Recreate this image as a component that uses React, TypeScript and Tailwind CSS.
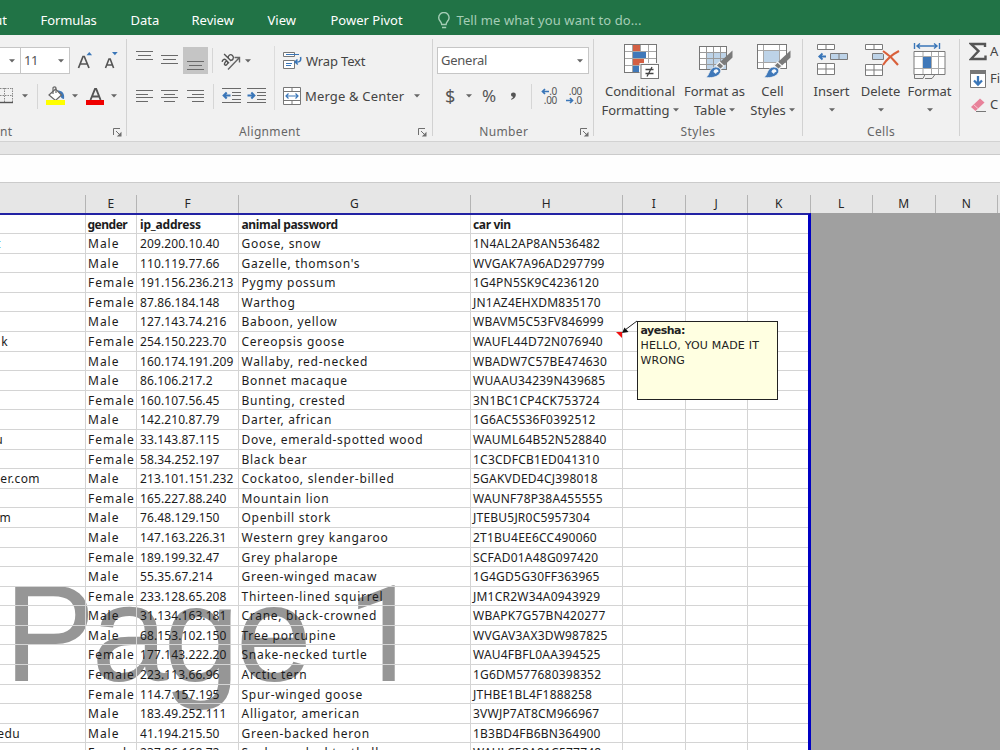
import type { ReactNode } from 'react';

const TABS = [
  { label: 'Formulas', css: 'ml-[33.5px] w-[90px] tracking-[-0.1px]' },
  { label: 'Data', css: 'w-[61px]' },
  { label: 'Review', css: 'w-[76px]' },
  { label: 'View', css: 'w-[63px]' },
  { label: 'Power Pivot', css: 'w-[106px]' },
];

const COLUMNS = [
  { name: '', css: 'w-[85.5px]' },
  { name: 'E', css: 'w-[51.5px]' },
  { name: 'F', css: 'w-[102px]' },
  { name: 'G', css: 'w-[231.5px]' },
  { name: 'H', css: 'w-[152.5px]' },
  { name: 'I', css: 'w-[62.5px]' },
  { name: 'J', css: 'w-[62.5px]' },
  { name: 'K', css: 'w-[62.5px]' },
  { name: 'L', css: 'w-[62.5px]' },
  { name: 'M', css: 'w-[62.5px]' },
  { name: 'N', css: 'w-[62.5px]' },
];

// gender, ip_address, animal password, car vin
const ROWS = [
  ['Male', '209.200.10.40', 'Goose, snow', '1N4AL2AP8AN536482'],
  ['Male', '110.119.77.66', "Gazelle, thomson's", 'WVGAK7A96AD297799'],
  ['Female', '191.156.236.213', 'Pygmy possum', '1G4PN5SK9C4236120'],
  ['Female', '87.86.184.148', 'Warthog', 'JN1AZ4EHXDM835170'],
  ['Male', '127.143.74.216', 'Baboon, yellow', 'WBAVM5C53FV846999'],
  ['Female', '254.150.223.70', 'Cereopsis goose', 'WAUFL44D72N076940'],
  ['Male', '160.174.191.209', 'Wallaby, red-necked', 'WBADW7C57BE474630'],
  ['Male', '86.106.217.2', 'Bonnet macaque', 'WUAAU34239N439685'],
  ['Female', '160.107.56.45', 'Bunting, crested', '3N1BC1CP4CK753724'],
  ['Male', '142.210.87.79', 'Darter, african', '1G6AC5S36F0392512'],
  ['Female', '33.143.87.115', 'Dove, emerald-spotted wood', 'WAUML64B52N528840'],
  ['Female', '58.34.252.197', 'Black bear', '1C3CDFCB1ED041310'],
  ['Male', '213.101.151.232', 'Cockatoo, slender-billed', '5GAKVDED4CJ398018'],
  ['Female', '165.227.88.240', 'Mountain lion', 'WAUNF78P38A455555'],
  ['Male', '76.48.129.150', 'Openbill stork', 'JTEBU5JR0C5957304'],
  ['Male', '147.163.226.31', 'Western grey kangaroo', '2T1BU4EE6CC490060'],
  ['Female', '189.199.32.47', 'Grey phalarope', 'SCFAD01A48G097420'],
  ['Male', '55.35.67.214', 'Green-winged macaw', '1G4GD5G30FF363965'],
  ['Female', '233.128.65.208', 'Thirteen-lined squirrel', 'JM1CR2W34A0943929'],
  ['Male', '31.134.163.181', 'Crane, black-crowned', 'WBAPK7G57BN420277'],
  ['Male', '68.153.102.150', 'Tree porcupine', 'WVGAV3AX3DW987825'],
  ['Female', '177.143.222.20', 'Snake-necked turtle', 'WAU4FBFL0AA394525'],
  ['Female', '223.113.66.96', 'Arctic tern', '1G6DM577680398352'],
  ['Female', '114.7.157.195', 'Spur-winged goose', 'JTHBE1BL4F1888258'],
  ['Male', '183.49.252.111', 'Alligator, american', '3VWJP7AT8CM966967'],
  ['Male', '41.194.215.50', 'Green-backed heron', '1B3BD4FB6BN364900'],
  ['Female', '237.86.168.72', 'Snake-necked turtle lly', 'WAULC58A81C577748'],
];

// tail ends of the e-mail column that is scrolled off to the left
const EMAILS: Record<number, { text: string; css: string }> = {
  0: { text: 't', css: 'w-[1px] text-[#3a9bb5]' },
  5: { text: 'k', css: 'w-[8px]' },
  10: { text: 'u', css: 'w-[3px]' },
  12: { text: 'er.com', css: 'w-[40px]' },
  14: { text: 'm', css: 'w-[11px]' },
  25: { text: 'edu', css: 'w-[20px]' },
};

const Caret = ({ css = '' }: { css?: string }) => (
  <svg className={`h-[4px] w-[6px] shrink-0 ${css}`} viewBox="0 0 6 4">
    <path d="M0 0.3h6L3 3.6z" fill="#666" />
  </svg>
);

const Lines = ({ rows, css = '' }: { rows: number[][]; css?: string }) => (
  <svg className={`h-[26px] w-[17px] shrink-0 ${css}`} viewBox="0 0 17 26">
    {rows.map(([x, y, w]) => (
      <rect key={y} x={x} y={y} width={w} height="1" fill="#6a6a6a" />
    ))}
  </svg>
);

const Sep = ({ css = '' }: { css?: string }) => (
  <div className={`h-[25px] w-px shrink-0 bg-[#d6d6d6] ${css}`} />
);

const Launcher = () => (
  <svg className="h-[9px] w-[9px]" viewBox="0 0 9 9" fill="none" stroke="#6f6f6f">
    <path d="M0.5 7V0.5H7M3 3l4 4" />
    <path d="M8.5 3.8v4.7H3.8z" fill="#6f6f6f" stroke="none" />
  </svg>
);

type GroupProps = {
  label: string;
  css: string;
  labelCss?: string;
  launcher?: boolean;
  children: ReactNode;
};

const Group = ({ label, css, labelCss = 'flex-1 text-center', launcher, children }: GroupProps) => (
  <div className={`flex h-[106px] shrink-0 flex-col pt-[8px] ${css}`}>
    <div className="h-[80px]">{children}</div>
    <div className="flex h-[19px] items-center justify-between text-[12px] text-[#666]">
      <div className={`tracking-[0.35px] ${labelCss}`}>{label}</div>
      {launcher && (
        <div className="mr-[4.5px] pt-px">
          <Launcher />
        </div>
      )}
    </div>
  </div>
);

const GroupSep = () => <div className="mt-[4px] h-[97px] w-px shrink-0 bg-[#d2d2d2]" />;

const Brush = () => (
  <g>
    <path d="M34.500 7.500v7L26 22.500l-4-3.500z" fill="#7a7a7a" />
    <path d="M21.500 19l4.500 4-3.500 3.500-4.500-4z" fill="#7a7a7a" stroke="#f1f1f1" strokeWidth="1.200" />
    <path d="M7.500 34.500c4-1 3.500-10.500 10-10.500 4.500 0 7 3 4 7C18.500 34.500 13 35 7.500 34.500z" fill="#3f78b9" stroke="#f1f1f1" strokeWidth="0.800" />
    <path d="M15.500 29c0-3 4-4 5-1 0 1.500-2 0.500-2.500 3z" fill="#f3f7fb" />
  </g>
);

const ConditionalIcon = () => (
  <svg className="h-[37px] w-[36px]" viewBox="0 0 36 37">
    <rect x="0.500" y="1.500" width="32" height="28" fill="#fff" />
    <rect x="9" y="2" width="7" height="6" fill="#d35f43" />
    <rect x="9" y="9" width="13" height="6" fill="#3f78b9" />
    <rect x="9" y="16" width="11" height="6" fill="#d35f43" />
    <rect x="9" y="23" width="6" height="6" fill="#3f78b9" />
    <path d="M8.500 1v28M16.500 1v7M24.500 1v28M0 8.500h32M0 15.500h32M0 22.500h32" stroke="#a6a6a6" fill="none" />
    <rect x="0.500" y="1.500" width="32" height="28" fill="none" stroke="#777" />
    <rect x="15.500" y="20" width="20" height="16" fill="#f1f1f1" />
    <rect x="17" y="21.500" width="17.500" height="14" fill="#fff" stroke="#777" />
    <path d="M21.500 26.500h8M21.500 30.500h8M28 24l-5 9.500" stroke="#444" strokeWidth="1.300" />
  </svg>
);

const TableIcon = () => (
  <svg className="h-[37px] w-[36px]" viewBox="0 0 36 37">
    <rect x="1.500" y="3.500" width="27" height="23" fill="#fff" />
    <rect x="8" y="9" width="20" height="17" fill="#bdd3e8" />
    <path d="M8.500 3v23M15.500 3v23M22.500 3v23M1 9.500h27M1 15.500h27M1 21.500h27" stroke="#9a9a9a" fill="none" />
    <rect x="1.500" y="3.500" width="27" height="23" fill="none" stroke="#777" />
    <Brush />
  </svg>
);

const CellStylesIcon = () => (
  <svg className="h-[37px] w-[36px]" viewBox="0 0 36 37">
    <rect x="1.500" y="1.500" width="29" height="24" fill="#fff" />
    <rect x="8" y="8" width="15" height="11" fill="#bdd3e8" />
    <path d="M7.500 1v24M23.500 1v24M1 7.500h29M1 19.500h29" stroke="#a6a6a6" fill="none" />
    <rect x="1.500" y="1.500" width="29" height="24" fill="none" stroke="#777" />
    <Brush />
  </svg>
);

const InsertIcon = () => (
  <svg className="h-[37px] w-[32px]" viewBox="0 0 32 37" stroke="#7a7a7a">
    <path d="M0.500 1.500h17v5h-17zM9 1.500v5M0.500 20.500h17v11h-17zM9 20.500v11M0.500 26h17" fill="#fff" />
    <path d="M13.500 10.500h17v6h-17zM22 10.500v6" fill="#bdd3e8" />
    <path d="M9 13.500H2.500M5.500 10.500l-3.200 3 3.200 3" fill="none" stroke="#3a76b8" strokeWidth="1.800" />
  </svg>
);

const DeleteIcon = () => (
  <svg className="h-[37px] w-[36px]" viewBox="0 0 36 37" stroke="#7a7a7a">
    <path d="M0.500 1.500h17v5h-17zM9 1.500v5M0.500 21.500h17v11h-17zM9 21.500v11M0.500 27h17" fill="#fff" />
    <path d="M7.500 10.500h11v6h-11z" fill="#bdd3e8" />
    <path d="M18 8c6 4 11 9 15 14M34 8c-6 3-12 8-16 14" fill="none" stroke="#f1f1f1" strokeWidth="4" />
    <path d="M18 8c6 4 11 9 15 14M34 8c-6 3-12 8-16 14" fill="none" stroke="#d9603b" strokeWidth="2.100" />
  </svg>
);

const FormatIcon = () => (
  <svg className="h-[38px] w-[34px]" viewBox="0 0 34 38">
    <path d="M1.500 0v6M26.500 0v6M4 3h20M7 0.500L4 3l3 2.500M21 0.500L24 3l-3 2.500" fill="none" stroke="#3a76b8" strokeWidth="1.400" />
    <path d="M1 8.500h31v23H1z" fill="#fff" />
    <path d="M10 8v23M18.500 8v23M25.500 8v23M1 13.500h31M1 25.500h31" stroke="#aaa" fill="none" />
    <rect x="10" y="14" width="8" height="11" fill="#3f78b9" />
    <path d="M1 8.500h31v23H1zM1.500 32v3.500h8.500l2-4M12 35.500h7l3-4" stroke="#7a7a7a" fill="none" />
  </svg>
);

type BigButtonProps = { icon: ReactNode; lines: string[]; css: string; iconCss?: string };

const BigButton = ({ icon, lines, css, iconCss = 'pl-[3px]' }: BigButtonProps) => (
  <div className={`flex shrink-0 flex-col items-center text-[13px] leading-[19px] whitespace-nowrap text-[#444] ${css}`}>
    <div className={`h-[39px] ${iconCss}`}>{icon}</div>
    <div>{lines[0]}</div>
    <div className="flex h-[19px] items-center gap-[3px]">
      {lines[1] && <span className="-mt-px">{lines[1]}</span>}
      <Caret css={lines[1] ? 'mb-[2px]' : 'mb-[2px]'} />
    </div>
  </div>
);

const FontGroup = () => (
  <Group label="nt" css="w-[126px]" labelCss="w-[12px] text-right" launcher>
    <div className="flex h-[35px] items-center">
      <div className="flex h-[27px] w-[21px] items-center justify-end border border-l-0 border-[#c6c6c6] bg-white pr-[5px]">
        <Caret />
      </div>
      <div className="flex h-[27px] w-[49px] items-center justify-between border border-l-0 border-[#c6c6c6] bg-white pr-[5px] pl-[3px] text-[13px] tracking-[-0.5px] text-[#555]">
        11
        <Caret />
      </div>
      <svg className="ml-[7px] h-[20px] w-[16px]" viewBox="0 0 16 20">
        <path d="M1.500 17L6 5.500h1.300L12 17M3.500 13h6.500" fill="none" stroke="#555" strokeWidth="1.700" />
        <path d="M9.500 4.300L12.300 1l2.800 3.300z" fill="#3a76b8" />
      </svg>
      <svg className="ml-[11px] h-[20px] w-[16px]" viewBox="0 0 16 20">
        <path d="M1.500 17L5 8h1.200L9.600 17M3 14h5" fill="none" stroke="#555" strokeWidth="1.600" />
        <path d="M8 1l2.900 3.300L13.700 1z" fill="#3a76b8" />
      </svg>
    </div>
    <div className="flex h-[36px] items-center">
      <svg className="h-[16px] w-[14px]" viewBox="0 0 14 16">
        <path d="M0 0.500h13M12.500 0v14M0 7.500h13M4.500 0v14" stroke="#888" strokeDasharray="1.500 1" fill="none" />
        <path d="M0 14.500h13" stroke="#555" strokeWidth="1.400" />
      </svg>
      <Caret css="ml-[8px]" />
      <Sep css="ml-[9px]" />
      <svg className="ml-[8px] h-[20px] w-[20px]" viewBox="0 0 20 20">
        <path d="M11 4.500c5 0 8 2.500 7 8.500-1.500 0-3-1-3.300-2.500z" fill="#3f78b9" />
        <path d="M3 9l6.500-6 6 6-6 5.500z" fill="#fff" stroke="#666" strokeWidth="1.200" />
        <path d="M7 8V2c0-1.500 3-1.500 3 0v5" fill="none" stroke="#666" strokeWidth="1.200" />
        <rect y="14" width="19" height="5" fill="#ff0" />
      </svg>
      <Caret css="ml-[6px]" />
      <svg className="ml-[8px] h-[20px] w-[19px]" viewBox="0 0 19 20">
        <path d="M4.500 14L9 3h1.200L14.600 14M6.300 10.500h6.500" fill="none" stroke="#555" strokeWidth="1.900" />
        <rect y="14" width="18" height="5" fill="#f00000" />
      </svg>
      <Caret css="ml-[6px]" />
    </div>
  </Group>
);

const AlignmentGroup = () => (
  <Group label="Alignment" css="w-[304px]" labelCss="flex-1 text-center pr-[5px]" launcher>
    <div className="flex">
      <div className="w-[147px]">
        <div className="flex h-[35px] items-center">
          <Lines css="ml-[9px]" rows={[[0, 3, 17], [2, 7, 13], [0, 11, 17]]} />
          <Lines css="ml-[8px]" rows={[[0, 7, 17], [2, 11, 13], [0, 15, 17]]} />
          <div className="ml-[5px] flex h-[27px] w-[25px] shrink-0 items-center justify-center bg-[#c5c5c5]">
            <Lines rows={[[0, 13, 17], [2, 17, 13], [0, 21, 17]]} />
          </div>
          <Sep css="ml-[4px]" />
          <svg className="ml-[8px] h-[22px] w-[21px] shrink-0" viewBox="0 0 21 22" fill="none" stroke="#555" strokeWidth="1.400">
            {/* slanted "ab" over an arrow */}
            <g transform="rotate(-45 7 10)">
              <path d="M1.500 7.200c1.500-1.200 4-1 4 1V13M5.500 9.500c-2.500 0-4.200 0.300-4.200 1.600 0 1.800 3 1.800 4.200 0" />
              <path d="M8.500 3v10M8.500 9c1-2.200 4.800-2.200 4.800 1 0 3.500-3.800 3.600-4.800 1.500" />
            </g>
            <path d="M7 19.500L18 8M13.500 7.500h5V12.500" stroke="#666" />
          </svg>
          <Caret css="ml-[3px]" />
        </div>
        <div className="flex h-[36px] items-center">
          <Lines css="ml-[9px]" rows={[[0, 7, 17], [0, 11, 12], [0, 14, 17], [0, 18, 12]]} />
          <Lines css="ml-[8px]" rows={[[0, 7, 17], [3, 11, 11], [0, 14, 17], [3, 18, 11]]} />
          <Lines css="ml-[9px]" rows={[[0, 7, 17], [5, 11, 12], [0, 14, 17], [5, 18, 12]]} />
          <Sep css="ml-[9px]" />
          <svg className="ml-[8px] h-[16px] w-[19px] shrink-0" viewBox="0 0 19 16">
            <path d="M0 0.500h19M10 4.500h9M10 7.500h9M10 11.500h9M0 14.500h19" stroke="#6a6a6a" />
            <path d="M8.500 7.500H2M4.700 4.500l-3 3 3 3" fill="none" stroke="#3a76b8" strokeWidth="2.100" />
          </svg>
          <svg className="ml-[6px] h-[16px] w-[19px] shrink-0" viewBox="0 0 19 16">
            <path d="M0 0.500h19M10 4.500h9M10 7.500h9M10 11.500h9M0 14.500h19" stroke="#6a6a6a" />
            <path d="M0.500 7.500H7M4.300 4.500l3 3-3 3" fill="none" stroke="#3a76b8" strokeWidth="2.100" />
          </svg>
        </div>
      </div>
      <div className="mt-[3px] h-[64px] w-px bg-[#dcdcdc]" />
      <div className="ml-[8px] text-[13px] text-[#444]">
        <div className="flex h-[35px] items-center">
          <svg className="h-[19px] w-[19px]" viewBox="0 0 19 19" fill="none">
            <path d="M0.500 1.500h11v4H0.500zM0.500 9.500h11v8H0.500z" fill="#fff" stroke="#777" />
            <path d="M3 3.500h13M3 12.500h6M3 14.500h5" stroke="#3a76b8" />
            <path d="M17.500 6c1 4-1 5.500-5 5M14.500 8.500L12 11l2.800 2.500" stroke="#3a76b8" strokeWidth="1.500" />
          </svg>
          <span className="mt-[2px] ml-[4px] tracking-[-0.15px]">Wrap Text</span>
        </div>
        <div className="flex h-[36px] items-center">
          <svg className="h-[18px] w-[18px]" viewBox="0 0 18 18" fill="none">
            <path d="M0.500 0.500h17v17H0.500z" fill="#fff" stroke="#777" />
            <path d="M0 4.500h18M0 13.500h18M9 0v4.500M9 13.500V18" stroke="#777" />
            <path d="M3 9h12M5.500 6.500L3 9l2.500 2.500M12.500 6.500L15 9l-2.500 2.500" stroke="#3a76b8" strokeWidth="1.200" />
          </svg>
          <span className="mt-[2px] ml-[4px] tracking-[0.17px]">Merge &amp; Center</span>
          <Caret css="ml-[10px]" />
        </div>
      </div>
    </div>
  </Group>
);

const NumberGroup = () => (
  <Group label="Number" css="w-[160px]" labelCss="flex-1 text-center pr-[5px]" launcher>
    <div className="flex h-[35px] items-center pl-[4px]">
      <div className="flex h-[27px] w-[152px] items-center justify-between border border-[#c6c6c6] bg-white pr-[5px] pl-[3px] text-[13px] tracking-[-0.25px] text-[#555]">
        <span className="mt-px">General</span>
        <Caret />
      </div>
    </div>
    <div className="flex h-[36px] items-center text-[#555]">
      <span className="ml-[12px] w-[12px] text-[18px]">$</span>
      <Caret css="ml-[9px]" />
      <span className="ml-[10px] w-[19px] text-[17px] tracking-[-0.2px]">%</span>
      <svg className="mb-px ml-[9px] h-[8px] w-[7px]" viewBox="0 0 7 8">
        <path d="M3.300 0.500c2 0 2.700 1.200 2.500 2.700C5.500 5.500 4 7 1.300 7.700L1 7c1.200-0.700 2-1.400 2-2.300C1.500 4.700 1 3.700 1 2.600 1 1.300 2 0.500 3.300 0.500z" fill="#555" />
      </svg>
      <Sep css="ml-[14px]" />
      <div className="ml-[8px] w-[17px] text-right text-[10px] leading-[9px] tracking-[-0.3px]">
        <div className="flex items-center justify-end">
          <svg className="h-[7px] w-[8px]" viewBox="0 0 8 7">
            <path d="M8 3.500H1.500M4 1L1.500 3.500 4 6" fill="none" stroke="#3a76b8" strokeWidth="1.700" />
          </svg>
          .0
        </div>
        <div>.00</div>
      </div>
      <div className="ml-[8px] w-[17px] text-right text-[10px] leading-[9px] tracking-[-0.3px]">
        <div>.00</div>
        <div className="flex items-center justify-end">
          <svg className="h-[7px] w-[8px]" viewBox="0 0 8 7">
            <path d="M0 3.500h6.500M4 1l2.500 2.500L4 6" fill="none" stroke="#3a76b8" strokeWidth="1.700" />
          </svg>
          .0
        </div>
      </div>
    </div>
  </Group>
);

const EditingGroup = () => (
  <div className="flex h-[106px] w-[39px] flex-col pt-[3px] pl-[9px] text-[13px] text-[#444]">
    <div className="flex h-[27px] items-center gap-[3px] whitespace-nowrap">
      <svg className="h-[19px] w-[18px] shrink-0" viewBox="0 0 18 19">
        <path d="M16 5V2H2l7.500 7L2 17h14.500v-3.500" fill="none" stroke="#555" strokeWidth="2.400" />
      </svg>
      A
    </div>
    <div className="flex h-[27px] items-center gap-[3px] whitespace-nowrap">
      <svg className="h-[18px] w-[18px] shrink-0" viewBox="0 0 18 18">
        <path d="M1.500 0.500h15v17h-15z" fill="#fff" stroke="#777" />
        <path d="M1 0h16v4H1z" fill="#777" />
        <path d="M9 6v8M5 10.500l4 4 4-4" fill="none" stroke="#3a76b8" strokeWidth="2.300" />
      </svg>
      Fi
    </div>
    <div className="flex h-[26px] items-center gap-[3px] whitespace-nowrap">
      <svg className="h-[16px] w-[18px] shrink-0" viewBox="0 0 18 16">
        <path d="M2 10L11 1.500l4.500 4L6.500 14z" fill="#e8829a" />
        <path d="M4.500 7.500l4.500 4" stroke="#f7c9d3" />
        <path d="M7 14.500h10" stroke="#777" />
      </svg>
      C
    </div>
  </div>
);

const Ribbon = () => (
  <div className="flex h-[107px] w-full overflow-hidden border-b border-[#d2d2d2] bg-[#f1f1f1]">
    <FontGroup />
    <GroupSep />
    <AlignmentGroup />
    <div className="w-px" />
    <GroupSep />
    <NumberGroup />
    <GroupSep />
    <Group label="Styles" css="w-[208px]">
      <div className="flex">
        <BigButton css="ml-[5px] w-[82px]" icon={<ConditionalIcon />} lines={['Conditional', 'Formatting']} />
        <BigButton css="w-[67px]" icon={<TableIcon />} lines={['Format as', 'Table']} />
        <BigButton css="w-[49px]" icon={<CellStylesIcon />} lines={['Cell', 'Styles']} />
      </div>
    </Group>
    <GroupSep />
    <Group label="Cells" css="w-[156px]">
      <div className="flex">
        <BigButton css="ml-[4px] w-[49px]" icon={<InsertIcon />} lines={['Insert', '']} />
        <BigButton css="w-[49px]" icon={<DeleteIcon />} lines={['Delete', '']} iconCss="pl-[5px]" />
        <BigButton css="w-[49px]" icon={<FormatIcon />} lines={['Format', '']} iconCss="pl-px" />
      </div>
    </Group>
    <GroupSep />
    <EditingGroup />
  </div>
);

const CELL = 'h-full shrink-0 border-r border-b border-[#d4d4d4] leading-[20px]';

const Sheet = () => (
  <div className="relative flex h-[537px] overflow-hidden bg-[#a0a0a0]">
    <div className="relative h-full w-[811px] overflow-hidden border-t-2 border-r-[3px] border-t-[#2222a4] border-r-[#0000c4] bg-white">
      <div className="absolute top-[341px] left-[4px] font-['Liberation_Sans'] text-[137px] leading-[156px] whitespace-pre text-[#969696]">
        <span className="tracking-[-4px]">Page </span>
        <span className="ml-[5px] font-['Roboto'] text-[134px]">1</span>
      </div>
      <div className="relative text-[12px] whitespace-nowrap text-[#1c1c1c]">
        <div className="flex h-[19px] font-bold tracking-[-0.2px]">
          <div className={`w-[85.5px] ${CELL}`} />
          <div className={`w-[51.5px] pl-[2px] tracking-[-0.5px] ${CELL}`}>gender</div>
          <div className={`w-[102px] pl-[3px] ${CELL}`}>ip_address</div>
          <div className={`w-[231.5px] pl-[2.5px] tracking-[-0.35px] ${CELL}`}>animal password</div>
          <div className={`w-[152.5px] pl-[2.5px] tracking-[-0.35px] ${CELL}`}>car vin</div>
          <div className={`w-[62.5px] ${CELL}`} />
          <div className={`w-[62.5px] ${CELL}`} />
          <div className="h-full flex-1 border-b border-[#d4d4d4]" />
        </div>
        {ROWS.map((row, i) => (
          <div key={row[3]} className="flex h-[19.6px]">
            <div className={`w-[85.5px] ${CELL}`}>
              {EMAILS[i] && (
                <div className={`flex justify-end overflow-hidden tracking-[0.4px] ${EMAILS[i].css}`}>{EMAILS[i].text}</div>
              )}
            </div>
            <div className={`w-[51.5px] pl-[2.5px] tracking-[1px] ${CELL}`}>{row[0]}</div>
            <div className={`w-[102px] pl-[3px] tracking-[0.1px] ${CELL}`}>{row[1]}</div>
            <div className={`w-[231.5px] pl-[2.5px] tracking-[0.72px] ${CELL}`}>{row[2]}</div>
            <div className={`w-[152.5px] pl-[2.5px] tracking-[0.22px] ${CELL}`}>{row[3]}</div>
            <div className={`w-[62.5px] ${CELL}`} />
            <div className={`w-[62.5px] ${CELL}`} />
            <div className="h-full flex-1 border-b border-[#d4d4d4]" />
          </div>
        ))}
      </div>
    </div>
    <svg className="absolute top-[107px] left-[614px] h-[20px] w-[26px]" viewBox="0 0 26 20">
      <path d="M2 12h6v6z" fill="#f01010" />
      <path d="M23 1L11 10" stroke="#222" />
      <path d="M8 13l2.500-5.500L14.500 12z" fill="#111" />
    </svg>
    <div className="absolute top-[108px] left-[637px] h-[79px] w-[141px] border border-[#222] bg-[#ffffe1] pt-px pl-[2.5px] font-['DejaVu_Sans'] text-[11px] leading-[15px] text-[#222]">
      <div className="font-bold tracking-[-0.5px]">ayesha:</div>
      <div className="tracking-[0.2px]">HELLO, YOU MADE IT</div>
      <div className="tracking-[0.1px]">WRONG</div>
    </div>
  </div>
);

const App = () => (
  <div className="h-[750px] w-[1000px] overflow-hidden bg-[#e6e6e6] font-['Noto_Sans','Open_Sans',sans-serif]">
    <div className="flex h-[35px] items-center overflow-hidden bg-[#217346] pt-[6px] text-[13px] whitespace-nowrap text-white">
      <div className="flex w-[7px] justify-end overflow-hidden">ut</div>
      {TABS.map((tab) => (
        <div key={tab.label} className={tab.css}>
          {tab.label}
        </div>
      ))}
      <svg className="h-[18px] w-[14px]" viewBox="0 0 14 18" fill="none" stroke="#a5cdb6" strokeWidth="1.400">
        <path d="M4.700 12.500c0-3-3-3.500-3-6.800a5.200 5.200 0 0 1 10.400 0c0 3.300-3 3.800-3 6.800zM5 15.500h4.200" />
      </svg>
      <span className="ml-[6px] tracking-[0.1px] text-[#a5cdb6]">Tell me what you want to do...</span>
    </div>
    <Ribbon />
    <div className="h-[12px]" />
    <div className="h-[29px] border-y border-[#cbcbcb] bg-[#fefefe]" />
    <div className="flex h-[30px] items-end">
      {COLUMNS.map((col) => (
        <div
          key={col.name}
          className={`flex h-[18px] shrink-0 items-center justify-center border-r border-[#b4b4b4] text-[12px] text-[#262626] ${col.css}`}
        >
          {col.name}
        </div>
      ))}
    </div>
    <Sheet />
  </div>
);

export default App;
